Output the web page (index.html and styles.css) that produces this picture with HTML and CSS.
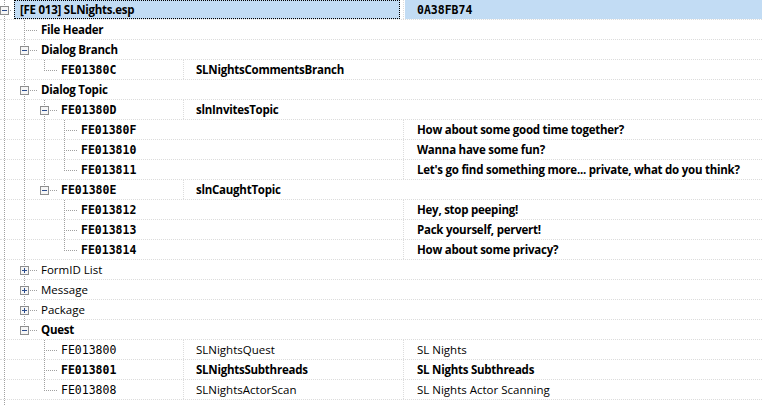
FILE: index.html
```html
<!DOCTYPE html>
<html lang="en">
<head>
  <meta charset="UTF-8" />
  <meta name="viewport" content="width=device-width, initial-scale=1.0" />
  <title>SLNights.esp</title>
  <link rel="stylesheet" href="styles.css">
</head>

<body>
  <div class="grid">

    <!-- Plugin root -->
    <div class="row b">
      <div class="c12">
        <span class="lv root tee"><svg class="btn" width="9" height="9" viewBox="0 0 9 9"><rect x="0.5" y="0.5" width="8" height="8" /><path d="M2 4.5h5" /></svg></span>
        <span class="focus">[FE 013] SLNights.esp</span>
      </div>
      <div class="c3 sel mono">0A38FB74</div>
    </div>

    <div class="row b">
      <div class="c123">
        <span class="lv pipe"></span><span class="lv tee"></span>
        <span class="lbl">File Header</span>
      </div>
    </div>

    <!-- Dialog Branch -->
    <div class="row b">
      <div class="c123">
        <span class="lv pipe"></span><span class="lv tee"><svg class="btn" width="9" height="9" viewBox="0 0 9 9"><rect x="0.5" y="0.5" width="8" height="8" /><path d="M2 4.5h5" /></svg></span>
        <span class="lbl">Dialog Branch</span>
      </div>
    </div>
    <div class="row b">
      <div class="c1">
        <span class="lv pipe"></span><span class="lv pipe"></span><span class="lv elbow"></span>
        <span class="lbl mono">FE01380C</span>
      </div>
      <div class="c23">SLNightsCommentsBranch</div>
    </div>

    <!-- Dialog Topic -->
    <div class="row b">
      <div class="c123">
        <span class="lv pipe"></span><span class="lv tee"><svg class="btn" width="9" height="9" viewBox="0 0 9 9"><rect x="0.5" y="0.5" width="8" height="8" /><path d="M2 4.5h5" /></svg></span>
        <span class="lbl">Dialog Topic</span>
      </div>
    </div>
    <div class="row b">
      <div class="c1">
        <span class="lv pipe"></span><span class="lv pipe"></span><span class="lv tee"><svg class="btn" width="9" height="9" viewBox="0 0 9 9"><rect x="0.5" y="0.5" width="8" height="8" /><path d="M2 4.5h5" /></svg></span>
        <span class="lbl mono">FE01380D</span>
      </div>
      <div class="c23">slnInvitesTopic</div>
    </div>
    <div class="row b">
      <div class="c12">
        <span class="lv pipe"></span><span class="lv pipe"></span><span class="lv pipe"></span><span class="lv tee"></span>
        <span class="lbl mono">FE01380F</span>
      </div>
      <div class="c3">How about some good time together?</div>
    </div>
    <div class="row b">
      <div class="c12">
        <span class="lv pipe"></span><span class="lv pipe"></span><span class="lv pipe"></span><span class="lv tee"></span>
        <span class="lbl mono">FE013810</span>
      </div>
      <div class="c3">Wanna have some fun?</div>
    </div>
    <div class="row b">
      <div class="c12">
        <span class="lv pipe"></span><span class="lv pipe"></span><span class="lv pipe"></span><span class="lv elbow"></span>
        <span class="lbl mono">FE013811</span>
      </div>
      <div class="c3">Let's go find something more... private, what do you think?</div>
    </div>
    <div class="row b">
      <div class="c1">
        <span class="lv pipe"></span><span class="lv pipe"></span><span class="lv elbow"><svg class="btn" width="9" height="9" viewBox="0 0 9 9"><rect x="0.5" y="0.5" width="8" height="8" /><path d="M2 4.5h5" /></svg></span>
        <span class="lbl mono">FE01380E</span>
      </div>
      <div class="c23">slnCaughtTopic</div>
    </div>
    <div class="row b">
      <div class="c12">
        <span class="lv pipe"></span><span class="lv pipe"></span><span class="lv"></span><span class="lv tee"></span>
        <span class="lbl mono">FE013812</span>
      </div>
      <div class="c3">Hey, stop peeping!</div>
    </div>
    <div class="row b">
      <div class="c12">
        <span class="lv pipe"></span><span class="lv pipe"></span><span class="lv"></span><span class="lv tee"></span>
        <span class="lbl mono">FE013813</span>
      </div>
      <div class="c3">Pack yourself, pervert!</div>
    </div>
    <div class="row b">
      <div class="c12">
        <span class="lv pipe"></span><span class="lv pipe"></span><span class="lv"></span><span class="lv elbow"></span>
        <span class="lbl mono">FE013814</span>
      </div>
      <div class="c3">How about some privacy?</div>
    </div>

    <!-- Collapsed groups -->
    <div class="row">
      <div class="c123">
        <span class="lv pipe"></span><span class="lv tee"><svg class="btn" width="9" height="9" viewBox="0 0 9 9"><rect x="0.5" y="0.5" width="8" height="8" /><path d="M2 4.5h5M4.5 2v5" /></svg></span>
        <span class="lbl">FormID List</span>
      </div>
    </div>
    <div class="row">
      <div class="c123">
        <span class="lv pipe"></span><span class="lv tee"><svg class="btn" width="9" height="9" viewBox="0 0 9 9"><rect x="0.5" y="0.5" width="8" height="8" /><path d="M2 4.5h5M4.5 2v5" /></svg></span>
        <span class="lbl">Message</span>
      </div>
    </div>
    <div class="row">
      <div class="c123">
        <span class="lv pipe"></span><span class="lv tee"><svg class="btn" width="9" height="9" viewBox="0 0 9 9"><rect x="0.5" y="0.5" width="8" height="8" /><path d="M2 4.5h5M4.5 2v5" /></svg></span>
        <span class="lbl">Package</span>
      </div>
    </div>

    <!-- Quest -->
    <div class="row b">
      <div class="c123">
        <span class="lv pipe"></span><span class="lv elbow"><svg class="btn" width="9" height="9" viewBox="0 0 9 9"><rect x="0.5" y="0.5" width="8" height="8" /><path d="M2 4.5h5" /></svg></span>
        <span class="lbl">Quest</span>
      </div>
    </div>
    <div class="row">
      <div class="c1">
        <span class="lv pipe"></span><span class="lv"></span><span class="lv tee"></span>
        <span class="lbl mono">FE013800</span>
      </div>
      <div class="c2">SLNightsQuest</div>
      <div class="c3">SL Nights</div>
    </div>
    <div class="row b">
      <div class="c1">
        <span class="lv pipe"></span><span class="lv"></span><span class="lv tee"></span>
        <span class="lbl mono">FE013801</span>
      </div>
      <div class="c2">SLNightsSubthreads</div>
      <div class="c3">SL Nights Subthreads</div>
    </div>
    <div class="row">
      <div class="c1">
        <span class="lv pipe"></span><span class="lv"></span><span class="lv elbow"></span>
        <span class="lbl mono">FE013808</span>
      </div>
      <div class="c2">SLNightsActorScan</div>
      <div class="c3">SL Nights Actor Scanning</div>
    </div>

    <div class="row tail">
      <div class="c123"><span class="lv pipe"></span></div>
    </div>
  </div>
</body>
</html>
```

FILE: styles.css
```css
body {
  margin: 0;
  font-family: "Open Sans", "Segoe UI", sans-serif;
  font-size: 11.5px;
  color: #000;
  background: #fff;
}

.grid {
  width: 762px;
  height: 405px;
  overflow: hidden;
}

.row {
  display: flex;
  height: 20px;
  box-sizing: border-box;
  border-bottom: 1px dotted #dcdcdc;
  line-height: 20px;
  white-space: nowrap;
}

.b {
  font-weight: 700;
  letter-spacing: -0.25px;
}

.mono {
  font-family: "DejaVu Sans Mono", monospace;
  font-size: 11.5px;
  letter-spacing: 0;
}

/* columns, spanning when the next cell is empty */
.c1, .c12, .c123 {
  display: flex;
  box-sizing: border-box;
}

.c1 {
  width: 184px;
  border-right: 1px dotted #dcdcdc;
}

.c12 {
  width: 404px;
  border-right: 1px dotted #dcdcdc;
}

.c123 {
  flex: 1;
}

.c2 {
  width: 220px;
  box-sizing: border-box;
  padding-left: 12px;
  border-right: 1px dotted #dcdcdc;
}

.c23 {
  flex: 1;
  padding-left: 12px;
}

.c3 {
  flex: 1;
  padding-left: 13px;
}

.sel {
  margin-left: 1px;
  padding-left: 12px;
  background: #c2dcf4;
}

/* tree lines */
.lv {
  flex: none;
  width: 20px;
  height: 20px;
  background-repeat: no-repeat;
}

.lv.root {
  width: 14px;
}

.pipe {
  background-image: repeating-linear-gradient(to bottom, #a0a0a0 0 1px, transparent 1px 2px);
  background-position: 4px 0;
  background-size: 1px 20px;
}

.tee, .elbow {
  background-image:
    repeating-linear-gradient(to bottom, #a0a0a0 0 1px, transparent 1px 2px),
    repeating-linear-gradient(to right, #a0a0a0 0 1px, transparent 1px 2px);
  background-position: 4px 0, 6px 10px;
  background-size: 1px 20px, 12px 1px;
}

.elbow {
  background-size: 1px 11px, 12px 1px;
}

.root.tee {
  background-size: 1px 20px, 6px 1px;
}

.btn {
  display: block;
  margin-top: 6px;
}

.btn rect {
  fill: #f6f6f6;
  stroke: #8e8e8e;
}

.btn path {
  stroke: #2b4c8c;
  stroke-width: 1;
}

.lbl {
  padding-left: 1px;
}

.focus {
  flex: 1;
  height: 19px;
  margin-right: 3px;
  padding-left: 5px;
  box-sizing: border-box;
  line-height: 18px;
  background: #c2dcf4;
  border: 1px dotted #000;
}

.tail {
  border-bottom: none;
}
```
